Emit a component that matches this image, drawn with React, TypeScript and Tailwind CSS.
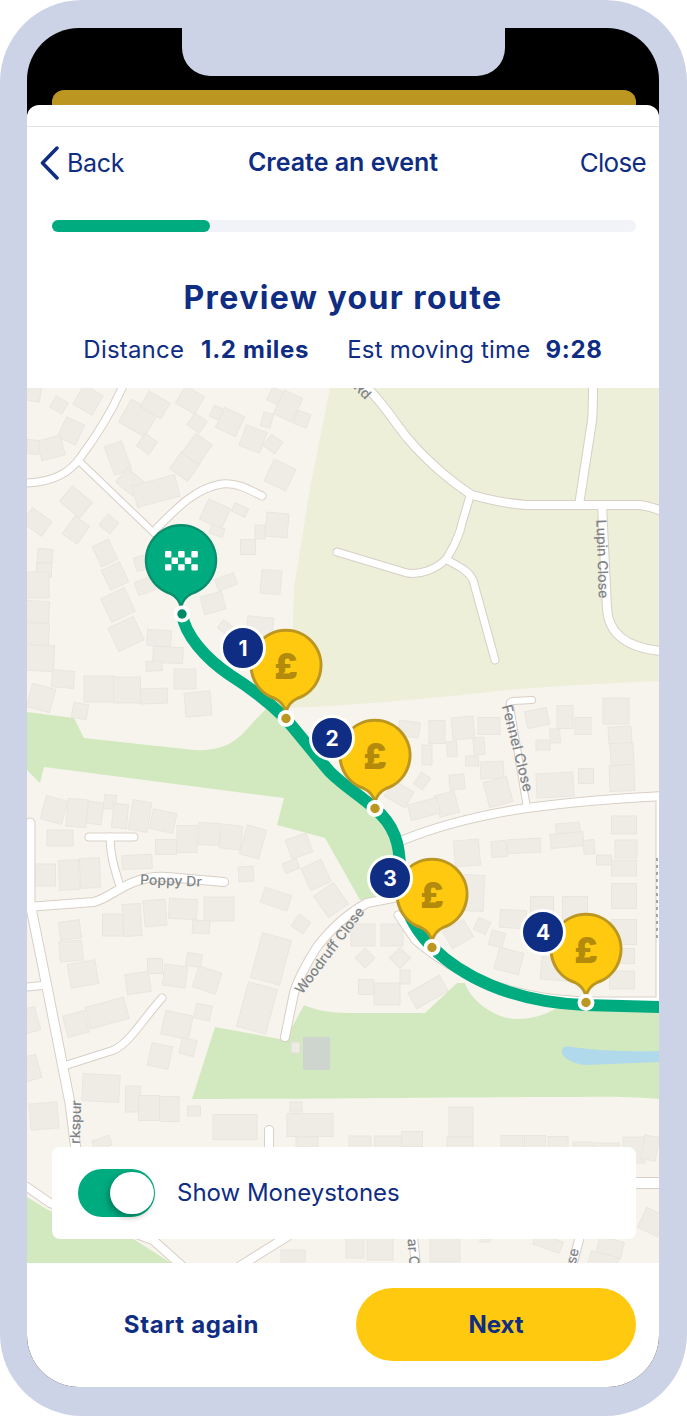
// [centre x, centre y, width, height, angle] in page pixels; the map svg viewBox uses the same numbers.
const buildings: number[][] = [
  [33, 394, 15, 14, 10], [59, 405, 14, 13, 30], [88, 400, 22, 22, 30], [71, 431, 20, 22, 25], [51, 448, 24, 20, -15],
  [33, 447, 12, 14, 5], [138, 418, 30, 26, 30], [155, 405, 24, 18, 30], [147, 444, 15, 15, 35], [190, 400, 22, 20, 30],
  [197, 423, 15, 14, 35], [118, 458, 18, 30, -20], [130, 482, 18, 22, -50], [156, 491, 44, 22, -15], [185, 466, 22, 22, 35],
  [197, 449, 20, 24, 35], [217, 413, 11, 12, 25], [230, 422, 22, 22, 25], [253, 439, 22, 22, 20], [267, 420, 10, 14, 15],
  [273, 444, 14, 14, 35], [275, 396, 12, 14, 25], [288, 406, 20, 26, 25], [302, 419, 14, 14, 20], [280, 475, 24, 24, 25],
  [76, 502, 26, 20, 40], [37, 522, 24, 18, 35], [76, 530, 18, 22, 35], [109, 524, 14, 14, 40], [215, 514, 24, 22, 25],
  [240, 510, 15, 9, 25], [217, 531, 14, 9, 20], [105, 553, 18, 22, -25], [115, 576, 20, 22, -25], [142, 563, 14, 14, -15],
  [145, 586, 18, 14, -20], [248, 547, 15, 15, 0], [260, 532, 10, 14, 0], [277, 525, 22, 24, 5], [226, 582, 20, 12, -20],
  [213, 603, 22, 18, -15], [271, 582, 20, 24, 5], [226, 628, 14, 10, 40], [260, 627, 26, 20, 5], [45, 556, 15, 14, 5],
  [44, 570, 15, 14, 0], [37, 585, 24, 26, 0], [37, 612, 24, 22, 3], [37, 634, 24, 22, 3], [40, 658, 28, 26, 3],
  [118, 605, 26, 26, -25], [126, 634, 28, 26, -25], [159, 638, 24, 16, 3], [168, 655, 30, 16, 3], [154, 666, 16, 10, -3],
  [185, 679, 22, 20, 0], [63, 679, 22, 17, 5], [99, 689, 30, 26, 0], [127, 690, 27, 26, 0], [154, 696, 27, 15, -2],
  [41, 698, 24, 24, 15], [80, 711, 15, 15, 10], [198, 704, 26, 24, -5],
  [409, 729, 21, 15, 8], [437, 732, 16, 23, 0], [463, 728, 22, 22, -5], [489, 726, 22, 17, 0], [427, 755, 10, 20, 0],
  [452, 749, 10, 15, -5], [479, 746, 11, 17, -5], [472, 761, 13, 10, 0], [492, 770, 23, 17, -3], [498, 792, 24, 26, -15],
  [457, 782, 15, 15, -5], [447, 804, 20, 22, -15], [424, 809, 30, 16, -15], [422, 781, 11, 14, 35], [399, 794, 24, 18, 30],
  [537, 718, 22, 17, -12], [565, 717, 16, 23, 0], [583, 726, 16, 17, 0], [555, 736, 10, 14, -3], [543, 745, 14, 10, 0],
  [616, 711, 26, 26, 0], [620, 735, 23, 17, -3], [622, 754, 23, 22, -3], [622, 778, 25, 26, -2], [555, 785, 37, 24, -3],
  [586, 776, 15, 15, 0], [624, 825, 25, 18, 0], [568, 830, 24, 14, -5],
  [467, 853, 25, 26, -5], [499, 849, 15, 16, -5], [524, 846, 33, 14, -3], [567, 840, 33, 14, -5], [589, 847, 11, 14, -5],
  [604, 860, 15, 10, 0], [626, 849, 22, 18, 0], [624, 868, 25, 16, 0], [624, 896, 25, 25, 0], [474, 893, 20, 36, 3],
  [542, 908, 23, 23, 0], [575, 908, 25, 23, 0], [513, 919, 26, 18, 3], [482, 926, 13, 13, 25], [497, 939, 14, 15, 15],
  [458, 934, 24, 20, -30], [509, 961, 25, 22, 15], [555, 969, 28, 22, 5], [624, 932, 25, 25, 0], [623, 956, 23, 15, 0],
  [622, 980, 25, 18, 0], [363, 935, 24, 22, 0], [392, 935, 22, 22, 0], [365, 958, 14, 14, 45], [400, 958, 15, 15, 45],
  [366, 987, 15, 15, 0], [387, 994, 26, 22, 0], [405, 977, 10, 14, 0], [428, 992, 36, 18, -30],
  [54, 810, 22, 24, 15], [77, 813, 20, 28, 5], [95, 813, 15, 22, 8], [110, 802, 12, 14, 5], [120, 816, 15, 24, 5],
  [140, 816, 19, 30, 10], [163, 821, 24, 20, 12], [60, 838, 26, 16, 0], [166, 847, 21, 15, 0], [187, 839, 20, 27, 0],
  [209, 834, 21, 22, 3], [231, 837, 21, 24, 7], [253, 842, 20, 30, 15], [137, 862, 30, 14, -3], [45, 875, 21, 22, 0],
  [69, 875, 20, 30, -2], [90, 873, 20, 30, -2], [246, 874, 15, 15, -3], [276, 899, 28, 16, 18], [299, 846, 22, 20, -20],
  [291, 866, 15, 10, -20], [316, 875, 22, 24, -25], [331, 900, 24, 26, -35], [301, 924, 14, 14, 35], [114, 925, 23, 22, 0],
  [132, 920, 18, 32, -3], [155, 913, 22, 26, -5], [183, 909, 28, 20, 3], [219, 909, 30, 24, 0], [201, 927, 17, 13, 3],
  [70, 930, 21, 18, -8], [71, 951, 23, 20, -5], [83, 974, 28, 24, -10], [155, 966, 15, 15, 0], [175, 976, 23, 21, 7],
  [194, 960, 15, 13, 10], [207, 980, 24, 22, 18], [138, 983, 24, 20, -8], [107, 1013, 40, 22, -15], [76, 1024, 22, 22, -15],
  [177, 1025, 28, 24, 12], [203, 1012, 16, 15, 12], [188, 1047, 15, 16, 15], [160, 1056, 21, 23, 12], [271, 959, 30, 46, 15],
  [257, 1008, 30, 46, 15], [101, 1088, 37, 27, 3], [133, 1099, 15, 26, 0], [149, 1108, 21, 25, 0], [170, 1109, 18, 25, 0],
  [194, 1111, 13, 10, 0], [44, 1116, 28, 26, -5], [27, 1069, 24, 24, -15], [27, 1021, 22, 24, -15], [235, 1127, 44, 25, 0],
  [310, 1125, 46, 23, 0], [296, 1107, 12, 10, 0], [307, 1142, 22, 10, 0], [360, 1142, 22, 12, 0], [102, 1143, 18, 10, -20],
  [461, 1122, 24, 30, 0], [460, 1143, 26, 12, 0], [388, 1142, 27, 12, 0], [412, 1139, 21, 15, 0], [512, 1143, 22, 15, 0],
  [535, 1143, 21, 15, 0], [558, 1143, 20, 13, 0], [583, 1146, 20, 8, 0], [607, 1147, 25, 8, 0], [634, 1150, 22, 26, 0],
  [650, 1148, 15, 24, 10], [652, 1222, 22, 22, 25], [355, 1248, 18, 20, 0], [380, 1249, 26, 22, 0], [445, 1250, 30, 24, 0],
  [485, 1240, 10, 4, 0], [548, 1243, 28, 12, 20], [610, 1248, 25, 18, 15], [603, 1262, 28, 16, 15], [293, 1257, 24, 14, 0],
];

const roads: [string, number][] = [
  ['M27 483C55 482 70 472 80 458C95 438 110 415 122 388', 7],
  ['M80 462L154 533', 6],
  ['M157 528C175 510 195 488 222 484C236 482 250 490 262 496', 7],
  ['M360 384L370 391C385 405 398 428 410 441C420 453 430 462 440 471C452 481 462 489 472 495C490 500 510 504 527 505L583 505L640 505C648 506 654 508 662 511', 8],
  ['M593 388C593 400 593 410 592 421L579 505', 8],
  ['M470 496C466 510 462 522 460 531C456 542 452 550 447 558', 7],
  ['M337 552L407 573C420 575 436 570 447 558', 7],
  ['M447 560C458 566 468 570 473 580L495 660', 7],
  ['M602 505L607 608C608 632 625 648 662 651', 8],
  ['M532 700L513 701C510 701 509 703 510 706L527 808', 6],
  ['M403 840C440 825 480 815 527 808C570 802 620 798 662 796', 8],
  ['M660 800L660 1000', 7],
  ['M398 915L415 940C455 975 510 998 585 1001L660 1001', 7],
  ['M398 897L367 903C345 915 330 930 317 947C305 965 296 985 294 993L285 1037', 8],
  ['M224 882L167 877C155 876 145 878 134 882C120 887 108 898 94 902L27 907', 8],
  ['M110 837C110 855 115 870 119 883', 7],
  ['M89 837L134 837', 7],
  ['M30 823L30 903L47 987L70 1103L76 1150', 9],
  ['M27 987L47 985', 7],
  ['M67 1065L114 1050C130 1042 140 1023 162 998', 7],
  ['M269 1130L269 1150', 8],
  ['M637 1183L662 1183', 10],
  ['M580 1236L572 1266', 8],
  ['M413 1236L416 1266', 8],
  ['M27 1187L50 1203L153 1240L182 1266', 8],
  ['M288 1236L240 1266', 8],
];

const routePath =
  'M182 614C185 635 205 658 230 675C252 689 270 703 285 718C300 735 315 755 330 772C345 787 360 795 374 808C395 825 400 845 400 870C400 905 415 930 432 947C460 975 510 1002 585 1005L662 1007';

const pinPath = 'M0 47C-1.5 41 -4 37 -11 33.5A35 35 0 1 1 11 33.5C4 37 1.5 41 0 47Z';

const labels: [string, number, number, number, number][] = [
  ['Lupin Close', 603, 559, 88, 14],
  ['Fennel Close', 518, 748, 76, 14.5],
  ['Poppy Dr', 171, 880, 2, 14],
  ['Woodruff Close', 329, 950, -53, 14],
  ['rkspur', 75, 1122, -88, 14],
  ['Rd', 363, 390, 45, 14],
  ['ar Cl', 414, 1254, 86, 14],
  ['se', 572, 1256, -78, 14],
];

const moneystones = [
  { n: 1, x: 286, y: 665, bx: 243, by: 648 },
  { n: 2, x: 375, y: 755, bx: 332, by: 738 },
  { n: 3, x: 432, y: 894, bx: 390, by: 878 },
  { n: 4, x: 586, y: 949, bx: 543, by: 932 },
];

const flagSquares = [
  [0, 0], [13.2, 0], [26.4, 0], [6.6, 6.6], [19.8, 6.6], [0, 13.2], [13.2, 13.2], [26.4, 13.2],
];

function RouteMap() {
  return (
    <svg viewBox="27 388 632 875" className="block w-full h-full bg-[#f7f4ee]">
      <path d="M330 388L310 488L294 588L290 708C340 706 420 700 507 690C560 686 610 683 660 681L660 388Z" fill="#edefd9" />
      <path
        d="M27 712L74 718L84 738L194 750C227 752 240 738 254 721L267 708L290 725L374 808L402 850L402 900L360 900L325 838L277 825L284 798L44 767L40 783L27 770Z"
        fill="#d2e9bf"
      />
      <path
        d="M350 1013L425 1013L457 983L465 983C470 1000 495 1019 517 1019C535 1019 552 1013 563 1003L660 1007L660 1099C620 1096 600 1097 573 1097C480 1097 300 1099 192 1099L215 1027L285 1040L304 1005C315 1010 330 1013 350 1013Z"
        fill="#d2e9bf"
      />
      <path d="M27 1197L48 1210L132 1238L171 1263L27 1263Z" fill="#d2e9bf" />
      <path d="M562 1050C563 1046 567 1046 572 1047C600 1051 630 1052 660 1051L660 1062C635 1063 610 1064 585 1065C575 1064 560 1058 562 1050Z" fill="#b0d9ec" />

      {buildings.map(([x, y, w, h, a], i) => (
        <rect
          key={i}
          x={x - w / 2}
          y={y - h / 2}
          width={w}
          height={h}
          transform={`rotate(${a} ${x} ${y})`}
          fill="#efece6"
          stroke="#e9e6df"
        />
      ))}
      <rect x="303" y="1037" width="27" height="33" fill="#ced5cf" />
      <rect x="291" y="1042" width="9" height="11" fill="#eeebe4" stroke="#e0ddd6" />

      {roads.map(([d, w], i) => (
        <path key={i} d={d} fill="none" stroke="#d8cfc6" strokeWidth={w + 2} strokeLinecap="round" strokeLinejoin="round" />
      ))}
      {roads.map(([d, w], i) => (
        <path key={i} d={d} fill="none" stroke="#ffffff" strokeWidth={w} strokeLinecap="round" strokeLinejoin="round" />
      ))}

      {labels.map(([t, x, y, a, size]) => (
        <text
          key={t}
          x={x}
          y={y}
          transform={`rotate(${a} ${x} ${y})`}
          textAnchor="middle"
          dominantBaseline="central"
          fontSize={size}
          fontWeight="500"
          fill="#7f8488"
        >
          {t}
        </text>
      ))}
      {/* street name clipped to illegible fragments by the map's right edge */}
      <path d="M657 858V940" fill="none" stroke="#8a8d90" strokeWidth="1.5" strokeDasharray="3 4" />

      <path d={routePath} fill="none" stroke="#00ab80" strokeWidth="12" strokeLinejoin="round" />

      {/* start pin */}
      <g transform="translate(181 560)">
        <path d={pinPath} fill="#00ab80" stroke="#0b8e6d" strokeWidth="2.5" />
        {flagSquares.map(([x, y], i) => (
          <rect key={i} x={x - 16} y={y - 9} width="6.4" height="6.4" rx="1" fill="#ffffff" />
        ))}
      </g>
      <circle cx="182" cy="614" r="8.5" fill="#ffffff" />
      <circle cx="182" cy="614" r="4.7" fill="#008a68" />

      {moneystones.map((m) => (
        <g key={m.n}>
          <g transform={`translate(${m.x} ${m.y})`}>
            <path d={pinPath} fill="#ffc90f" stroke="#bb9722" strokeWidth="3" />
            <text y="1" textAnchor="middle" dominantBaseline="central" fontSize="35" fontWeight="900" fill="#b38a0c">
              £
            </text>
          </g>
          <circle cx={m.x} cy={m.y + 53.5} r="8.5" fill="#ffffff" />
          <circle cx={m.x} cy={m.y + 53.5} r="4.7" fill="#bb9722" />
          <circle cx={m.bx} cy={m.by} r="21.5" fill="#0f2d83" stroke="#ffffff" strokeWidth="3" />
          <text x={m.bx} y={m.by} textAnchor="middle" dominantBaseline="central" fontSize="21" fontWeight="700" fill="#ffffff">
            {m.n}
          </text>
        </g>
      ))}
    </svg>
  );
}

export default function App() {
  return (
    <div className="w-[687px] h-[1416px] bg-white [font-family:Inter,sans-serif] text-[#0f2d83]">
      <div className="h-full rounded-[82px] bg-[#cdd3e7] pl-[27px] pr-[28px] pt-[28px] pb-[29px]">
        <div className="relative h-full flex flex-col rounded-[52px] overflow-hidden bg-black">
          {/* notch */}
          <div className="absolute top-0 left-[155px] w-[323px] h-[48px] rounded-b-[28px] bg-[#cdd3e7]" />

          <div className="mt-[62px] ml-[25px] mr-[23px] h-[15px] rounded-t-[12px] bg-[#bb9722]" />

          <div className="flex-1 flex flex-col min-h-0 rounded-t-[12px] bg-white">
            <div className="h-[22px] border-b border-[#e3e3e6]" />

            <div className="h-[72px] pl-[13px] pr-[13px] grid grid-cols-[1fr_auto_1fr] items-center">
              <button className="flex items-center gap-[7px] text-[25px] leading-none tracking-[-0.3px]">
                <svg width="20" height="34" viewBox="0 0 20 34" fill="none" stroke="currentColor" strokeWidth="3.5" strokeLinecap="round" strokeLinejoin="round">
                  <path d="M17 2L2.5 17L17 32" />
                </svg>
                Back
              </button>
              <p className="text-[25px] font-semibold">Create an event</p>
              <button className="justify-self-end text-[26px] leading-none tracking-[-0.7px]">Close</button>
            </div>

            <div className="mt-[21px] ml-[25px] mr-[23px] h-[12px] rounded-full bg-[#f1f3f8]">
              <div className="w-[158px] h-full rounded-full bg-[#00ab80]" />
            </div>

            <h1 className="mt-[46px] text-center text-[32px] leading-[40px] font-bold tracking-[1.4px]">Preview your route</h1>

            <div className="mt-[16px] mb-[22px] h-[32px] flex items-center justify-center text-[24px] leading-[32px] tracking-[0.2px]">
              <span>Distance</span>
              <span className="ml-[17px] font-bold tracking-[0.7px]">1.2 miles</span>
              <span className="ml-[38px]">Est moving time</span>
              <span className="ml-[15px] font-bold tracking-[0.7px]">9:28</span>
            </div>

            <div className="relative flex-1 min-h-0">
              <RouteMap />
              <div className="absolute left-[25px] right-[23px] bottom-[24px] h-[92px] rounded-[8px] bg-white flex items-center pl-[26px]">
                <div className="w-[77px] h-[48px] rounded-full bg-[#00ab80] py-[3px] pr-[1px] flex justify-end">
                  <div className="w-[44px] h-[42px] rounded-full bg-white shadow-[-2px_3px_6px_rgba(0,0,0,0.3)]" />
                </div>
                <span className="ml-[22px] text-[24px]">Show Moneystones</span>
              </div>
            </div>

            <div className="h-[124px] shrink-0 flex items-start pt-[25px] pl-[25px] pr-[23px]">
              <button className="w-[279px] h-[73px] text-[24px] font-bold tracking-[0.7px]">Start again</button>
              <button className="ml-[25px] w-[280px] h-[73px] rounded-full bg-[#ffc90f] text-[24px] font-bold">Next</button>
            </div>
          </div>
        </div>
      </div>
    </div>
  );
}
